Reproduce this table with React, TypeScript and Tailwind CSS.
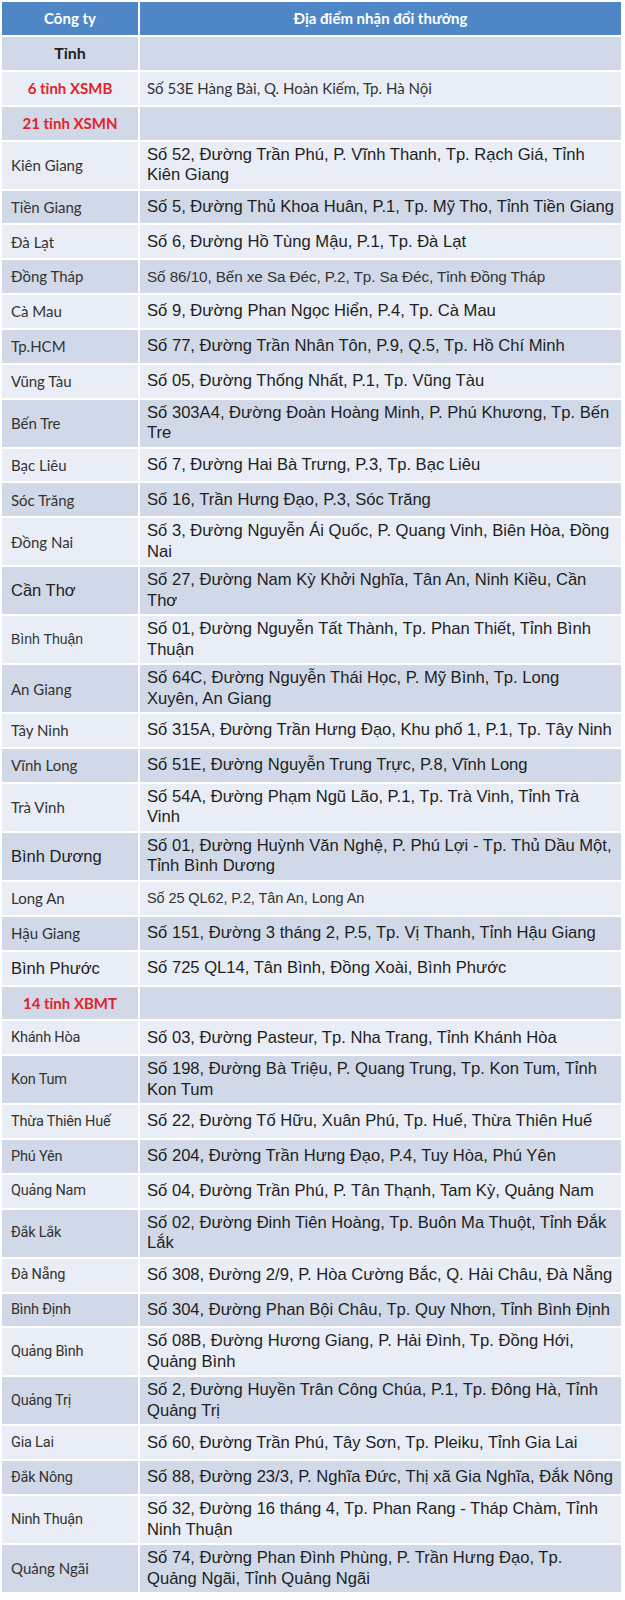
import React from "react";

type LS = "cal" | "ar" | "arS" | "nar" | "red" | "bold";
type RS = "ar" | "cal" | "calS" | "calT";
type Row = { l: string; ls: LS; r: string[]; rs: RS };

const rows: Row[] = [
  { l: "Tỉnh", ls: "bold", r: [], rs: "ar" },
  { l: "6 tỉnh XSMB", ls: "red", r: ["Số 53E Hàng Bài, Q. Hoàn Kiếm, Tp. Hà Nội"], rs: "cal" },
  { l: "21 tỉnh XSMN", ls: "red", r: [], rs: "ar" },
  { l: "Kiên Giang", ls: "cal", r: ["Số 52, Đường Trần Phú, P. Vĩnh Thanh, Tp. Rạch Giá, Tỉnh", "Kiên Giang"], rs: "ar" },
  { l: "Tiền Giang", ls: "cal", r: ["Số 5, Đường Thủ Khoa Huân, P.1, Tp. Mỹ Tho, Tỉnh Tiền Giang"], rs: "ar" },
  { l: "Đà Lạt", ls: "cal", r: ["Số 6, Đường Hồ Tùng Mậu, P.1, Tp. Đà Lạt"], rs: "ar" },
  { l: "Đồng Tháp", ls: "cal", r: ["Số 86/10, Bến xe Sa Đéc, P.2, Tp. Sa Đéc, Tỉnh Đồng Tháp"], rs: "calT" },
  { l: "Cà Mau", ls: "cal", r: ["Số 9, Đường Phan Ngọc Hiển, P.4, Tp. Cà Mau"], rs: "ar" },
  { l: "Tp.HCM", ls: "cal", r: ["Số 77, Đường Trần Nhân Tôn, P.9, Q.5, Tp. Hồ Chí Minh"], rs: "ar" },
  { l: "Vũng Tàu", ls: "cal", r: ["Số 05, Đường Thống Nhất, P.1, Tp. Vũng Tàu"], rs: "ar" },
  { l: "Bến Tre", ls: "cal", r: ["Số 303A4, Đường Đoàn Hoàng Minh, P. Phú Khương, Tp. Bến", "Tre"], rs: "ar" },
  { l: "Bạc Liêu", ls: "cal", r: ["Số 7, Đường Hai Bà Trưng, P.3, Tp. Bạc Liêu"], rs: "ar" },
  { l: "Sóc Trăng", ls: "cal", r: ["Số 16, Trần Hưng Đạo, P.3, Sóc Trăng"], rs: "ar" },
  { l: "Đồng Nai", ls: "cal", r: ["Số 3, Đường Nguyễn Ái Quốc, P. Quang Vinh, Biên Hòa, Đồng", "Nai"], rs: "ar" },
  { l: "Cần Thơ", ls: "ar", r: ["Số 27, Đường Nam Kỳ Khởi Nghĩa, Tân An, Ninh Kiều, Cần", "Thơ"], rs: "ar" },
  { l: "Bình Thuận", ls: "arS", r: ["Số 01, Đường Nguyễn Tất Thành, Tp. Phan Thiết, Tỉnh Bình", "Thuận"], rs: "ar" },
  { l: "An Giang", ls: "cal", r: ["Số 64C, Đường Nguyễn Thái Học, P. Mỹ Bình, Tp. Long", "Xuyên, An Giang"], rs: "ar" },
  { l: "Tây Ninh", ls: "cal", r: ["Số 315A, Đường Trần Hưng Đạo, Khu phố 1, P.1, Tp. Tây Ninh"], rs: "ar" },
  { l: "Vĩnh Long", ls: "cal", r: ["Số 51E, Đường Nguyễn Trung Trực, P.8, Vĩnh Long"], rs: "ar" },
  { l: "Trà Vinh", ls: "cal", r: ["Số 54A, Đường Phạm Ngũ Lão, P.1, Tp. Trà Vinh, Tỉnh Trà", "Vinh"], rs: "ar" },
  { l: "Bình Dương", ls: "ar", r: ["Số 01, Đường Huỳnh Văn Nghệ, P. Phú Lợi - Tp. Thủ Dầu Một,", "Tỉnh Bình Dương"], rs: "ar" },
  { l: "Long An", ls: "cal", r: ["Số 25 QL62, P.2, Tân An, Long An"], rs: "calS" },
  { l: "Hậu Giang", ls: "cal", r: ["Số 151, Đường 3 tháng 2, P.5, Tp. Vị Thanh, Tỉnh Hậu Giang"], rs: "ar" },
  { l: "Bình Phước", ls: "ar", r: ["Số 725 QL14, Tân Bình, Đồng Xoài, Bình Phước"], rs: "ar" },
  { l: "14 tỉnh XBMT", ls: "red", r: [], rs: "ar" },
  { l: "Khánh Hòa", ls: "nar", r: ["Số 03, Đường Pasteur, Tp. Nha Trang, Tỉnh Khánh Hòa"], rs: "ar" },
  { l: "Kon Tum", ls: "nar", r: ["Số 198, Đường Bà Triệu, P. Quang Trung, Tp. Kon Tum, Tỉnh", "Kon Tum"], rs: "ar" },
  { l: "Thừa Thiên Huế", ls: "nar", r: ["Số 22, Đường Tố Hữu, Xuân Phú, Tp. Huế, Thừa Thiên Huế"], rs: "ar" },
  { l: "Phú Yên", ls: "nar", r: ["Số 204, Đường Trần Hưng Đạo, P.4, Tuy Hòa, Phú Yên"], rs: "ar" },
  { l: "Quảng Nam", ls: "nar", r: ["Số 04, Đường Trần Phú, P. Tân Thạnh, Tam Kỳ, Quảng Nam"], rs: "ar" },
  { l: "Đắk Lắk", ls: "nar", r: ["Số 02, Đường Đinh Tiên Hoàng, Tp. Buôn Ma Thuột, Tỉnh Đắk", "Lắk"], rs: "ar" },
  { l: "Đà Nẵng", ls: "nar", r: ["Số 308, Đường 2/9, P. Hòa Cường Bắc, Q. Hải Châu, Đà Nẵng"], rs: "ar" },
  { l: "Bình Định", ls: "nar", r: ["Số 304, Đường Phan Bội Châu, Tp. Quy Nhơn, Tỉnh Bình Định"], rs: "ar" },
  { l: "Quảng Bình", ls: "nar", r: ["Số 08B, Đường Hương Giang, P. Hải Đình, Tp. Đồng Hới,", "Quảng Bình"], rs: "ar" },
  { l: "Quảng Trị", ls: "nar", r: ["Số 2, Đường Huyền Trân Công Chúa, P.1, Tp. Đông Hà, Tỉnh", "Quảng Trị"], rs: "ar" },
  { l: "Gia Lai", ls: "nar", r: ["Số 60, Đường Trần Phú, Tây Sơn, Tp. Pleiku, Tỉnh Gia Lai"], rs: "ar" },
  { l: "Đắk Nông", ls: "nar", r: ["Số 88, Đường 23/3, P. Nghĩa Đức, Thị xã Gia Nghĩa, Đắk Nông"], rs: "ar" },
  { l: "Ninh Thuận", ls: "nar", r: ["Số 32, Đường 16 tháng 4, Tp. Phan Rang - Tháp Chàm, Tỉnh", "Ninh Thuận"], rs: "ar" },
  { l: "Quảng Ngãi", ls: "cal", r: ["Số 74, Đường Phan Đình Phùng, P. Trần Hưng Đạo, Tp.", "Quảng Ngãi, Tỉnh Quảng Ngãi"], rs: "ar" },
];

const lClass: Record<LS, string> = {
  cal: "pl-[9px] font-['Lato',sans-serif] text-[15px] text-[#333]",
  ar: "pl-[9px] font-['Liberation_Sans',Arial,sans-serif] text-[16.5px] text-[#222]",
  arS: "pl-[9px] font-['Liberation_Sans',Arial,sans-serif] text-[14px] text-[#333]",
  nar: "pl-[9px] font-['Roboto',sans-serif] text-[14.5px] text-[#333] tracking-[-0.2px]",
  red: "justify-center font-['Lato',sans-serif] font-bold text-[15px] text-[#e3222b]",
  bold: "justify-center font-['Lato',sans-serif] font-bold text-[16px] text-[#222]",
};

const rClass: Record<RS, string> = {
  ar: "font-['Liberation_Sans',Arial,sans-serif] text-[16.6px] leading-[20.5px] text-[#1e1e1e]",
  cal: "font-['Lato',sans-serif] text-[15px] leading-[20px] text-[#333]",
  calS: "font-['Liberation_Sans',Arial,sans-serif] text-[14.5px] leading-[20px] text-[#333] tracking-[-0.1px]",
  calT: "font-['Liberation_Sans',Arial,sans-serif] text-[15.3px] leading-[20px] text-[#333] tracking-[-0.1px]",
};

export default function App() {
  return (
    <div className="w-[625px] min-h-[1600px] bg-white">
      <div className="flex w-[621px] flex-col gap-[2px] p-[2px] pr-0">
        <div className="grid h-[33px] grid-cols-[136px_1fr] gap-[2px] font-['Lato',sans-serif] text-[15px] font-bold text-white">
          <div className="flex items-center justify-center bg-[#4f86c6]">Công ty</div>
          <div className="flex items-center justify-center bg-[#4f86c6]">Địa điểm nhận đổi thưởng</div>
        </div>
        {rows.map((row, i) => {
          const bg = i % 2 === 0 ? "bg-[#d1d9e8]" : "bg-[#e9edf5]";
          const h = row.r.length > 1 ? "h-[47px]" : "h-[32.85px]";
          return (
            <div key={i} className={`grid grid-cols-[136px_1fr] gap-[2px] ${h}`}>
              <div className={`flex items-center whitespace-nowrap ${bg} ${lClass[row.ls]}`}>{row.l}</div>
              <div className={`flex flex-col justify-center overflow-hidden whitespace-nowrap pl-[7px] ${bg} ${rClass[row.rs]}`}>
                {row.r.map((line, j) => (
                  <div key={j}>{line}</div>
                ))}
              </div>
            </div>
          );
        })}
      </div>
    </div>
  );
}
